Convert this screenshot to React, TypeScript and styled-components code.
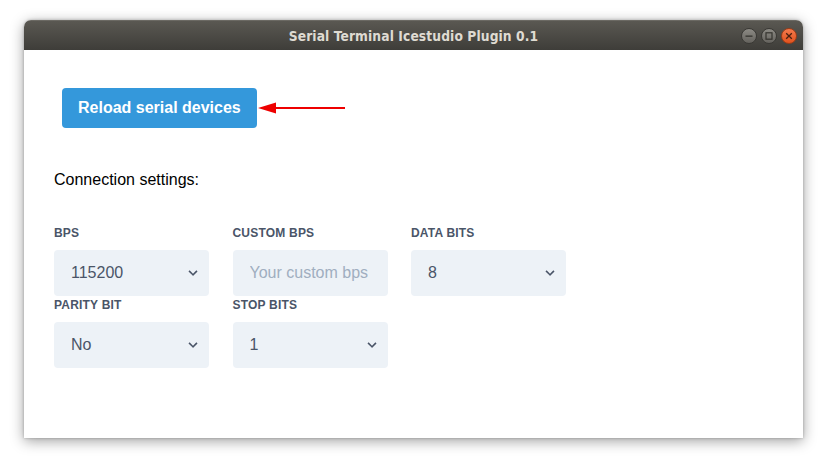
import React from "react";
import styled, { createGlobalStyle } from "styled-components";

const Global = createGlobalStyle`
  html, body { margin: 0; padding: 0; background: #ffffff; }
  body { font-family: "Liberation Sans", Arial, sans-serif; }
  * { box-sizing: border-box; }
`;

const Stage = styled.div`
  width: 825px;
  height: 459px;
  padding: 20px 22px 0 24px;
  background: #ffffff;
`;

const Window = styled.div`
  width: 779px;
  height: 418px;
  display: flex;
  flex-direction: column;
  border-radius: 7px 7px 0 0;
  box-shadow: 0 3px 14px rgba(0, 0, 0, 0.38), 0 0 3px rgba(0, 0, 0, 0.25);
  overflow: hidden;
  background: #ffffff;
`;

const TitleBar = styled.div`
  height: 30px;
  flex: none;
  display: grid;
  grid-template-columns: 1fr auto 1fr;
  align-items: center;
  padding: 0 6px;
  background: linear-gradient(#5a5852, #3e3d39);
  border-top: 1px solid #6b6963;
`;

const Title = styled.div`
  grid-column: 2;
  font-family: "DejaVu Sans Condensed", "DejaVu Sans", sans-serif;
  font-weight: bold;
  font-size: 13.7px;
  color: #dfdbd2;
  letter-spacing: 0.1px;
`;

const Controls = styled.div`
  grid-column: 3;
  justify-self: end;
  display: flex;
  gap: 4px;
  align-items: center;
`;

const Circle = styled.div<{ $close?: boolean }>`
  width: 16px;
  height: 16px;
  border-radius: 50%;
  display: flex;
  align-items: center;
  justify-content: center;
  border: 1px solid ${(p) => (p.$close ? "#9c3c17" : "#3a3935")};
  background: ${(p) =>
    p.$close
      ? "linear-gradient(#f47a4c, #e1521e)"
      : "linear-gradient(#8c8a84, #64625d)"};
`;

const Reload = styled.button`
  height: 40px;
  padding: 0 16px;
  border: none;
  border-radius: 4px;
  background: #3498db;
  color: #ffffff;
  font-family: "Liberation Sans", Arial, sans-serif;
  font-weight: bold;
  font-size: 16px;
`;

const Content = styled.div`
  flex: 1;
  padding: 38px 30px 0 30px;
  background: #ffffff;
`;

const ButtonRow = styled.div`
  display: flex;
  align-items: center;
  margin-left: 8px;
`;

const Heading = styled.div`
  margin-top: 43px;
  font-size: 16px;
  line-height: 18px;
  color: #000000;
`;

const Grid = styled.div`
  margin-top: 36px;
  display: grid;
  grid-template-columns: repeat(3, 155px);
  column-gap: 23.5px;
  row-gap: 1px;
`;

const Field = styled.div`
  display: flex;
  flex-direction: column;
`;

const Label = styled.div`
  font-size: 12px;
  line-height: 16px;
  font-weight: bold;
  text-transform: uppercase;
  letter-spacing: 0.2px;
  color: #4a5568;
  margin-bottom: 9px;
`;

const Box = styled.div`
  position: relative;
  height: 46px;
  display: flex;
  align-items: center;
  padding: 0 17px;
  background: #edf2f7;
  border-radius: 4px;
  font-size: 16px;
  color: #4a5568;
`;

const Placeholder = styled.span`
  color: #a0aec0;
  white-space: nowrap;
  overflow: hidden;
`;

const Chevron = styled.svg`
  position: absolute;
  right: 8px;
  top: 15px;
  width: 16px;
  height: 16px;
  fill: #4a5568;
`;

const Arrow = () => (
  <svg width="90" height="14" viewBox="0 0 90 14">
    <line x1="16" y1="7" x2="88" y2="7" stroke="#ee0000" strokeWidth="2.2" />
    <polygon points="1,7 19,1.5 19,12.5" fill="#ee0000" />
  </svg>
);

const Select = ({ value }: { value: string }) => (
  <Box>
    {value}
    <Chevron viewBox="0 0 20 20">
      <path d="M9.293 12.95l.707.707L15.657 8l-1.414-1.414L10 10.828 5.757 6.586 4.343 8z" />
    </Chevron>
  </Box>
);

export default function App() {
  return (
    <>
      <Global />
      <Stage>
        <Window>
          <TitleBar>
            <Title>Serial Terminal Icestudio Plugin 0.1</Title>
            <Controls>
              <Circle>
                <svg width="8" height="8" viewBox="0 0 8 8">
                  <rect x="0.5" y="3.5" width="7" height="1.3" fill="#35342f" />
                </svg>
              </Circle>
              <Circle>
                <svg width="8" height="8" viewBox="0 0 8 8">
                  <rect x="1" y="0.8" width="6" height="6.4" fill="none" stroke="#35342f" strokeWidth="1.2" />
                </svg>
              </Circle>
              <Circle $close>
                <svg width="8" height="8" viewBox="0 0 8 8">
                  <path d="M1.2 1.2 L6.8 6.8 M6.8 1.2 L1.2 6.8" stroke="#4a2010" strokeWidth="1.3" />
                </svg>
              </Circle>
            </Controls>
          </TitleBar>
          <Content>
            <ButtonRow>
              <Reload>Reload serial devices</Reload>
              <Arrow />
            </ButtonRow>
            <Heading>Connection settings:</Heading>
            <Grid>
              <Field>
                <Label>BPS</Label>
                <Select value="115200" />
              </Field>
              <Field>
                <Label>Custom BPS</Label>
                <Box>
                  <Placeholder>Your custom bps</Placeholder>
                </Box>
              </Field>
              <Field>
                <Label>Data bits</Label>
                <Select value="8" />
              </Field>
              <Field>
                <Label>Parity bit</Label>
                <Select value="No" />
              </Field>
              <Field>
                <Label>Stop bits</Label>
                <Select value="1" />
              </Field>
            </Grid>
          </Content>
        </Window>
      </Stage>
    </>
  );
}
